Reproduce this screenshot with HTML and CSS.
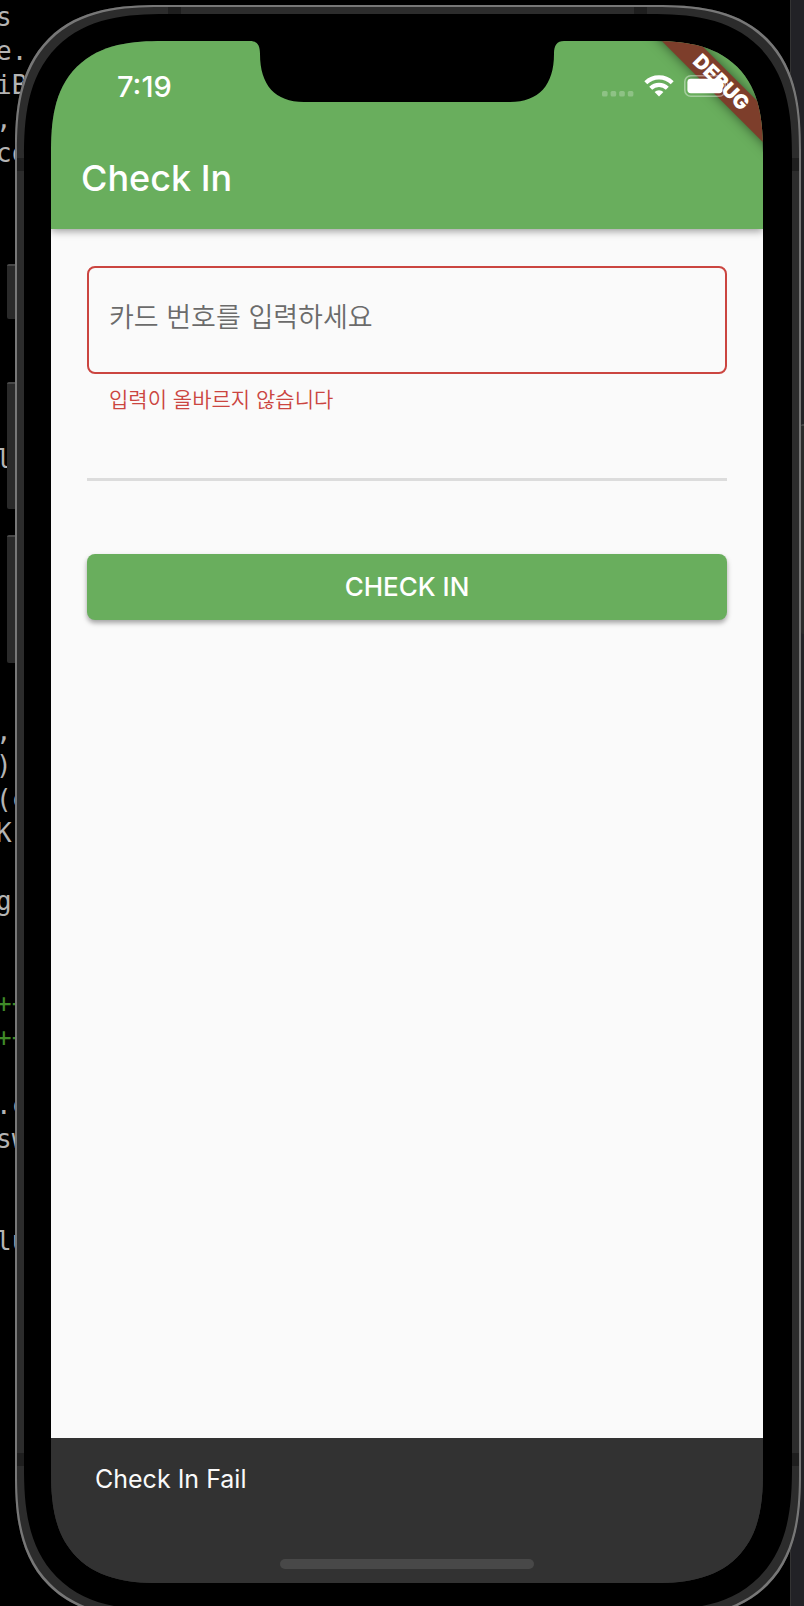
FILE: index.html
```html
<!DOCTYPE html>
<html lang="ko">
<head>
<meta charset="utf-8">
<meta name="viewport" content="width=device-width, initial-scale=1">
<title>Check In</title>
<link rel="stylesheet" href="styles.css">
</head>
<body>
<div class="desktop">
  <pre class="editor">s
e.
iB
,
co








l







,
)
(c
K

g


<span class="added">++
++</span>

.c
sw


lu</pre>
  <div class="side-panel"></div>
  <div class="phone">
    <span class="key key-mute"></span>
    <span class="key key-up"></span>
    <span class="key key-down"></span>
    <span class="key key-power"></span>
    <span class="seam seam-top seam-start"></span>
    <span class="seam seam-top seam-end"></span>
    <span class="seam seam-left seam-high"></span>
    <span class="seam seam-right seam-high"></span>
    <span class="seam seam-left seam-low"></span>
    <span class="seam seam-right seam-low"></span>
    <div class="screen">
      <header class="app-bar">
        <div class="ribbon">DEBUG</div>
        <div class="status">
          <span class="clock">7:19</span>
          <span class="indicators">
            <svg class="signal" width="32" height="22" viewBox="0 0 32 22" aria-hidden="true">
              <g fill="#fff" fill-opacity=".25">
                <rect x="0" y="16" width="5.6" height="5.6" rx="1.6"/>
                <rect x="8.6" y="16" width="5.600" height="5.6" rx="1.6"/>
                <rect x="17.2" y="16" width="5.6" height="5.6" rx="1.6"/>
                <rect x="25.8" y="16" width="5.6" height="5.6" rx="1.6"/>
              </g>
            </svg>
            <svg class="wifi" width="30" height="22" viewBox="0 0 30 22" aria-hidden="true">
              <g fill="none" stroke="#fff" stroke-width="4.2">
                <path d="M1.8 7.8a19 19 0 0 1 26.4 0"/>
                <path d="M6.7 13.2a11.8 11.8 0 0 1 16.6 0"/>
              </g>
              <path d="M10.6 17a6.2 6.2 0 0 1 8.8 0L15 21.6z" fill="#fff"/>
            </svg>
            <svg class="battery" width="46" height="22" viewBox="0 0 46 22" aria-hidden="true">
              <rect x=".8" y=".8" width="40.4" height="20.4" rx="6" fill="none" stroke="#fff" stroke-opacity=".4" stroke-width="1.6"/>
              <rect x="3.4" y="3.8" width="35.2" height="14.4" rx="3.4" fill="#fff"/>
              <path d="M43 7.500c3 1 3 6 0 7z" fill="#fff" fill-opacity=".4"/>
            </svg>
          </span>
        </div>
        <h1 class="title">Check In</h1>
      </header>
      <main class="content">
        <form class="form">
          <input class="card-input" id="card" type="text" placeholder="카드 번호를 입력하세요" aria-label="카드 번호" aria-invalid="true" aria-describedby="card-error">
          <p class="error" id="card-error">입력이 올바르지 않습니다</p>
          <hr class="divider">
          <button class="submit" type="button">CHECK IN</button>
        </form>
      </main>
      <footer class="snackbar" role="status">
        <span class="message">Check In Fail</span>
        <span class="home-indicator"></span>
      </footer>
      <svg class="notch" width="322" height="62" viewBox="0 0 322 62" aria-hidden="true">
        <path d="M0 -1V0H4C11 0 14 4 14 13C14 44 29 61 58 61H264C293 61 308 44 308 13C308 4 311 0 318 0H322V-1Z" fill="#000"/>
      </svg>
    </div>
  </div>
</div>
</body>
</html>
```
FILE: styles.css
```css
* {
  box-sizing: border-box;
}

body {
  margin: 0;
  background: #000;
  font-family: Inter, "Noto Sans CJK KR", sans-serif;
}

.desktop {
  position: relative;
  height: 100vh;
  padding: 5px 3px 0 15px;
  overflow: hidden;
}

/* Windows behind the simulator */
.editor {
  position: absolute;
  top: 0;
  left: -4px;
  margin: 0;
  color: #b4b4b4;
  font: 26px/34px "DejaVu Sans Mono", monospace;
}

.added {
  color: #3f8a28;
}

.side-panel {
  position: absolute;
  top: 0;
  right: 0;
  bottom: 0;
  width: 14px;
  border-left: 1px solid #333;
  background: #222226;
}

/* Device frame */
.phone {
  position: relative;
  display: flex;
  height: calc(100vh + 8px);
  padding: 36px 38px 36px 36px;
  border-radius: 120px;
  background: #000;
  box-shadow: inset 0 0 0 2px #777, inset 0 0 0 9px #2c2c2c;
}

.key {
  position: absolute;
  left: -8px;
  width: 8px;
  border-top: 2px solid #484848;
  border-radius: 2px 0 0 2px;
  background: #2a2a2a;
}

.key-mute {
  top: 259px;
  height: 55px;
}

.key-up {
  top: 377px;
  height: 127px;
}

.key-down {
  top: 530px;
  height: 128px;
}

.key-power {
  top: 419px;
  right: -8px;
  left: auto;
  height: 210px;
}

.seam {
  position: absolute;
  background: #1e1e1e;
}

.seam-top {
  top: 2px;
  width: 13px;
  height: 7px;
}

.seam-start {
  left: 153px;
}

.seam-end {
  right: 154px;
}

.seam-left,
.seam-right {
  width: 7px;
  height: 13px;
}

.seam-left {
  left: 2px;
}

.seam-right {
  right: 2px;
}

.seam-high {
  top: 153px;
}

.seam-low {
  bottom: 153px;
}

.screen {
  position: relative;
  display: flex;
  flex: 1;
  flex-direction: column;
  overflow: hidden;
  border-radius: 92px;
  background: #323232;
}

@supports (corner-shape: superellipse(1.4)) {
  .phone {
    border-radius: 145px;
    corner-shape: superellipse(1.4);
  }

  .screen {
    border-radius: 112px;
    corner-shape: superellipse(1.4);
  }
}

.notch {
  position: absolute;
  top: 0;
  left: 50%;
  transform: translateX(-50%);
}

/* App bar */
.app-bar {
  position: relative;
  padding: 27px 30px 27px;
  background: #69ae5d;
  color: #fff;
  box-shadow: 0 2px 8px rgba(0, 0, 0, 0.4);
}

.ribbon {
  position: absolute;
  top: 29px;
  right: -58px;
  width: 200px;
  background: #7d3e2b;
  box-shadow: 0 0 12px rgba(0, 0, 0, 0.5);
  font-size: 20px;
  font-weight: 900;
  line-height: 25px;
  text-align: center;
  transform: rotate(45deg);
}

.status {
  position: relative;
  display: flex;
  align-items: center;
  justify-content: space-between;
  height: 36px;
  padding: 0 3px 0 36px;
}

.clock {
  font-size: 29px;
  font-weight: 500;
}

.indicators {
  display: flex;
  gap: 10px;
}

.title {
  margin: 50px 0 0;
  font-size: 36px;
  font-weight: 500;
  line-height: 48px;
}

/* Form */
.content {
  flex: 1;
  padding: 37px 36px;
  background: #fafafa;
}

.form {
  display: flex;
  flex-direction: column;
}

.card-input {
  width: 100%;
  height: 108px;
  padding: 0 20px 6px;
  border: 2px solid #cb4540;
  border-radius: 8px;
  outline: 0;
  background: transparent;
  color: #222;
  font-family: inherit;
  font-size: 27px;
}

.card-input::placeholder {
  color: #6b6b6b;
  font-weight: 350;
  opacity: 1;
}

.error {
  margin: 10px 22px 0;
  color: #cb4540;
  font-size: 21px;
  font-weight: 350;
  line-height: 32px;
}

.divider {
  width: 100%;
  height: 3px;
  margin: 62px 0 73px;
  border: 0;
  background: #dcdcdc;
}

.submit {
  height: 66px;
  padding-bottom: 3px;
  border: 0;
  border-radius: 8px;
  background: #69ae5d;
  box-shadow: 0 3px 5px rgba(0, 0, 0, 0.35);
  color: #fff;
  font-family: inherit;
  font-size: 26px;
  font-weight: 500;
}

/* Snackbar */
.snackbar {
  display: flex;
  flex-direction: column;
  justify-content: space-between;
  height: 145px;
  padding: 24px 44px 14px;
  background: #323232;
  color: #fafafa;
}

.message {
  font-size: 25px;
  line-height: 34px;
}

.home-indicator {
  align-self: center;
  width: 254px;
  max-width: 100%;
  height: 10px;
  border-radius: 5px;
  background: #484848;
}
```
